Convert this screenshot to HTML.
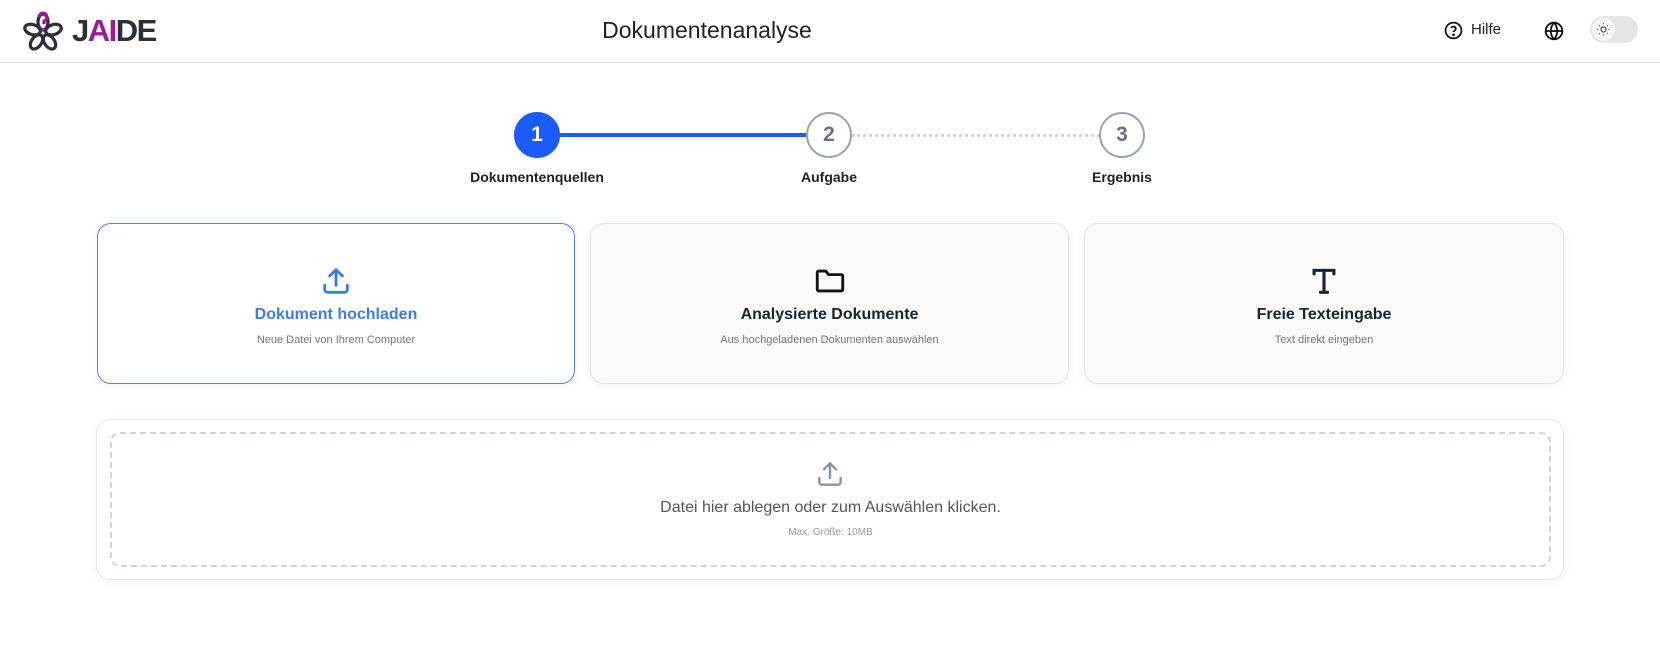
<!DOCTYPE html>
<html><head><meta charset="utf-8"><style>
*{margin:0;padding:0;box-sizing:border-box}
body{width:1660px;height:645px;background:#fff;font-family:"Liberation Sans",sans-serif;position:relative;overflow:hidden;color:#1f2329}
.hdr{position:absolute;left:0;top:0;width:1660px;height:63px;border-bottom:1px solid #dcdcdc}
.abs{position:absolute}
.title{left:0;width:1414px;top:17px;text-align:center;font-size:23px;color:#222}
.circ{position:absolute;width:46px;height:46px;border-radius:50%;top:112px;text-align:center;line-height:42px;font-size:21px;font-weight:bold;border:2px solid #9ca3af;color:#6b7280;background:#fff}
.lbl{position:absolute;top:169px;font-size:14px;font-weight:bold;color:#222;text-align:center;width:200px}
.card{position:absolute;top:223px;height:161px;border-radius:14px;border:1px solid #e5e5e5;background:#fafafa;box-shadow:0 2px 10px rgba(0,0,0,.05);text-align:center}
.card .t{position:absolute;top:82px;width:100%;font-size:16px;font-weight:bold;color:#1f2329}
.card .s{position:absolute;top:110px;width:100%;font-size:11px;color:#777}
.card svg{position:absolute;left:50%;top:40px;margin-left:-17px}
</style></head><body>
<div class="hdr"></div>
<svg class="abs" style="left:21px;top:10px" width="44" height="44" viewBox="0 0 44 44" fill="none" stroke="#2f2f38" stroke-width="3.2">
<g transform="translate(22,23)">
<ellipse cx="0" cy="-11" rx="5" ry="8" transform="rotate(0)"/>
<ellipse cx="0" cy="-11" rx="5" ry="8" transform="rotate(72)"/>
<ellipse cx="0" cy="-11" rx="5" ry="8" transform="rotate(144)"/>
<ellipse cx="0" cy="-11" rx="5" ry="8" transform="rotate(216)"/>
<ellipse cx="0" cy="-11" rx="5" ry="8" transform="rotate(288)"/>
</g>
<path d="M18 7a4 4 0 1 1 5 4v3" stroke="#9b1a9b"/><circle cx="22" cy="20" r="1.8" fill="#9b1a9b" stroke="none"/>
</svg>
<div class="abs" style="left:72px;top:13px;font-size:31px;font-weight:bold;letter-spacing:-1.5px;color:#2f2f38">J<span style="color:#9b1a9b">AI</span>DE</div>
<div class="abs title">Dokumentenanalyse</div>
<svg class="abs" style="left:1444px;top:21px" width="19" height="19" viewBox="0 0 24 24" fill="none" stroke="#111" stroke-width="2.2"><circle cx="12" cy="12" r="10"/><path d="M9.1 9a3 3 0 0 1 5.8 1c0 2-3 2.5-3 4"/><circle cx="12" cy="17.5" r=".6" fill="#111"/></svg>
<div class="abs" style="left:1471px;top:21px;font-size:15px;color:#222">Hilfe</div>
<svg class="abs" style="left:1544px;top:21px" width="20" height="20" viewBox="0 0 24 24" fill="none" stroke="#111" stroke-width="2.2"><circle cx="12" cy="12" r="10"/><path d="M2 12h20M12 2a15 15 0 0 1 0 20M12 2a15 15 0 0 0 0 20"/></svg>
<div class="abs" style="left:1590px;top:16px;width:48px;height:27px;border-radius:14px;background:#e5e5e5"></div>
<div class="abs" style="left:1592px;top:18px;width:23px;height:23px;border-radius:50%;background:#f6f6f6"></div>
<svg class="abs" style="left:1596px;top:22px" width="15" height="15" viewBox="0 0 24 24" fill="none" stroke="#555" stroke-width="2"><circle cx="12" cy="12" r="4"/><path d="M12 2v2M12 20v2M2 12h2M20 12h2M4.9 4.9l1.4 1.4M17.7 17.7l1.4 1.4M4.9 19.1l1.4-1.4M17.7 6.3l1.4-1.4" stroke-dasharray="1.5 1"/></svg>

<div class="abs" style="left:540px;top:133px;width:270px;height:4px;background:#1a5cff"></div>
<div class="abs" style="left:852px;top:134px;width:248px;border-top:3px dotted #d1d5db"></div>
<div class="circ" style="left:514px;background:#1a5cff;border-color:#1a5cff;color:#fff">1</div>
<div class="circ" style="left:806px">2</div>
<div class="circ" style="left:1099px">3</div>
<div class="lbl" style="left:437px">Dokumentenquellen</div>
<div class="lbl" style="left:729px">Aufgabe</div>
<div class="lbl" style="left:1022px">Ergebnis</div>

<div class="card" style="left:97px;width:478px;background:#fff;border-color:#4a84f5">
<svg width="34" height="34" viewBox="0 0 24 24" fill="none" stroke="#3b7cf5" stroke-width="2" stroke-linecap="round" stroke-linejoin="round"><path d="M4 15v3a2 2 0 0 0 2 2h12a2 2 0 0 0 2-2v-3M12 15V4M7.5 8.5 12 4l4.5 4.5"/></svg>
<div class="t" style="color:#3b7cf5">Dokument hochladen</div><div class="s">Neue Datei von Ihrem Computer</div></div>
<div class="card" style="left:590px;width:479px">
<svg width="34" height="34" viewBox="0 0 24 24" fill="none" stroke="#111" stroke-width="2" stroke-linejoin="round"><path d="M3 6a1 1 0 0 1 1-1h5l2 2.5h9a1 1 0 0 1 1 1V18a1 1 0 0 1-1 1H4a1 1 0 0 1-1-1z"/></svg>
<div class="t">Analysierte Dokumente</div><div class="s">Aus hochgeladenen Dokumenten auswählen</div></div>
<div class="card" style="left:1084px;width:480px">
<svg width="34" height="34" viewBox="0 0 24 24" fill="none" stroke="#1f2329" stroke-width="2.2" stroke-linecap="round"><path d="M5 7V4.5h14V7M12 4.5V20M9.5 20h5"/></svg>
<div class="t">Freie Texteingabe</div><div class="s">Text direkt eingeben</div></div>

<div class="abs" style="left:96px;top:419px;width:1468px;height:161px;border-radius:14px;border:1px solid #e8e8e8;box-shadow:0 2px 10px rgba(0,0,0,.05);background:#fff"></div>
<div class="abs" style="left:110px;top:432px;width:1441px;height:135px;border:2px dashed #d1d5db;border-radius:10px"></div>
<svg class="abs" style="left:814px;top:458px" width="32" height="32" viewBox="0 0 24 24" fill="none" stroke="#8b93a1" stroke-width="1.8" stroke-linecap="round" stroke-linejoin="round"><path d="M4 15v3a2 2 0 0 0 2 2h12a2 2 0 0 0 2-2v-3M12 15V4M7.5 8.5 12 4l4.5 4.5"/></svg>
<div class="abs" style="left:110px;width:1441px;top:499px;text-align:center;font-size:16px;color:#555">Datei hier ablegen oder zum Auswählen klicken.</div>
<div class="abs" style="left:110px;width:1441px;top:527px;text-align:center;font-size:10px;color:#999">Max. Größe: 10MB</div>
</body></html>
